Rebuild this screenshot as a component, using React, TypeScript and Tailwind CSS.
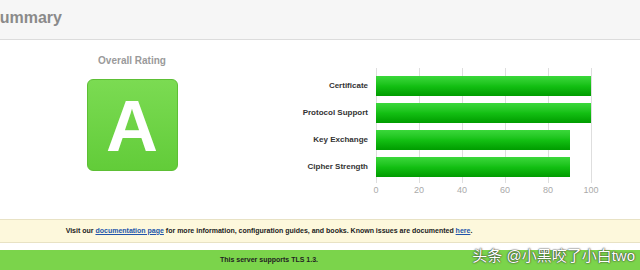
import React from 'react';

const RATINGS = [
  { label: 'Certificate', score: 100 },
  { label: 'Protocol Support', score: 100 },
  { label: 'Key Exchange', score: 90 },
  { label: 'Cipher Strength', score: 90 },
];

const TICKS = [0, 20, 40, 60, 80, 100];

export default function App() {
  return (
    <div className="relative w-[640px] h-[270px] overflow-hidden bg-white font-['Liberation_Sans',Arial,sans-serif]">

      {/* Section header */}
      <div className="h-[40px] bg-[#f6f6f6] border-b border-[#dcdcdc] flex items-center">
        <h1 className="ml-[-11px] mt-[-4px] text-[16px] font-bold text-[#8a8a8a]">Summary</h1>
      </div>

      {/* Rating + chart */}
      <div className="h-[179px] flex">
        <div className="w-[264px] flex flex-col items-center pt-[15px]">
          <p className="text-[10px] font-bold text-[#9a9a9a] leading-[12px]">Overall Rating</p>
          <div className="mt-[12px] w-[91px] h-[92px] rounded-[6px] border border-[#5dbf35] bg-gradient-to-b from-[#7bdb52] to-[#62cc39] flex items-center justify-center">
            <span className="text-[72px] font-bold text-white leading-none mt-[2px]">A</span>
          </div>
        </div>

        <div className="pt-[28px]">
          <div className="flex">
            {/* Labels */}
            <div className="w-[112px] pr-[8px] pt-[8px] flex flex-col gap-[7px]">
              {RATINGS.map((r) => (
                <div key={r.label} className="h-[20px] flex items-center justify-end text-[8px] font-bold text-[#333]">
                  {r.label}
                </div>
              ))}
            </div>

            {/* Bars */}
            <div className="relative w-[216px] h-[115px] pt-[8px] flex flex-col gap-[7px]">
              {TICKS.map((t) => (
                <div
                  key={t}
                  className="absolute top-0 bottom-0 w-px bg-[#dedede]"
                  style={{ left: `${(t / 100) * 215}px` }}
                />
              ))}
              {RATINGS.map((r) => (
                <div key={r.label} className="relative h-[20px]">
                  <div
                    className="h-full bg-gradient-to-b from-[#3ad83a] via-[#13c013] to-[#009c00]"
                    style={{ width: `${(r.score / 100) * 215}px` }}
                  />
                </div>
              ))}
            </div>
          </div>

          {/* Axis */}
          <div className="relative ml-[112px] w-[216px] h-[14px]">
            {TICKS.map((t) => (
              <span
                key={t}
                className="absolute top-[2px] -translate-x-1/2 text-[9px] text-[#aaa] leading-[10px]"
                style={{ left: `${(t / 100) * 215}px` }}
              >
                {t}
              </span>
            ))}
          </div>
        </div>
      </div>

      {/* Documentation notice */}
      <div className="h-[24px] bg-[#fdf8dc] border-y border-[#e8e2c4] flex items-center justify-center pr-[102px]">
        <p className="text-[7px] font-bold text-[#222]">
          Visit our <a href="#" className="text-[#2255aa] underline">documentation page</a> for more information, configuration guides, and books. Known issues are documented <a href="#" className="text-[#2255aa] underline">here</a>.
        </p>
      </div>

      <div className="h-[7px]" />

      {/* TLS 1.3 banner */}
      <div className="h-[20px] bg-[#7bd44b] flex items-center justify-center pr-[102px]">
        <p className="text-[7px] font-bold text-[#222]">This server supports TLS 1.3.</p>
      </div>

      {/* Watermark */}
      <div className="absolute right-[5px] bottom-[7px] text-[15px] text-white leading-none font-['Liberation_Sans','Noto_Sans_CJK_SC',sans-serif] [text-shadow:0_0_2px_#333,0_0_1px_#333]">
        头条 @小黑咬了小白two
      </div>
    </div>
  );
}
